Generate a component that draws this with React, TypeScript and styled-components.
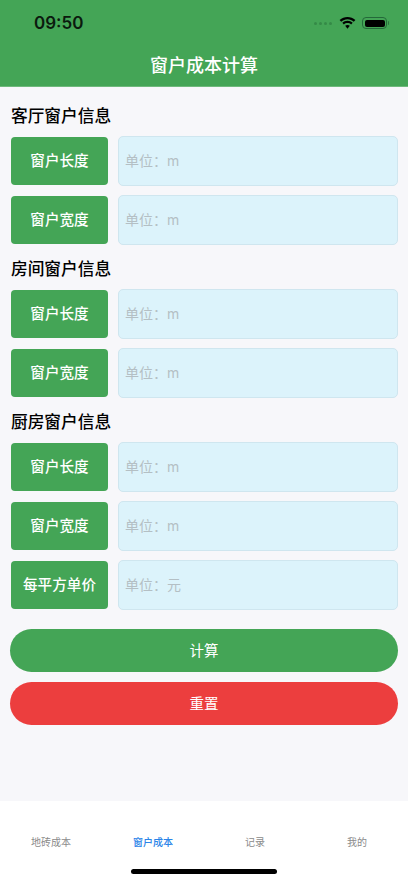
import React from "react";
import styled, { createGlobalStyle } from "styled-components";

const GlobalStyle = createGlobalStyle`
  html, body {
    margin: 0;
    padding: 0;
    background: #f7f7fa;
  }
  * {
    box-sizing: border-box;
  }
`;

const FONT = `Inter, "Noto Sans CJK SC", sans-serif`;

const sections = [
  {
    title: "客厅窗户信息",
    rows: [
      { label: "窗户长度", unit: "单位： m" },
      { label: "窗户宽度", unit: "单位： m" },
    ],
  },
  {
    title: "房间窗户信息",
    rows: [
      { label: "窗户长度", unit: "单位： m" },
      { label: "窗户宽度", unit: "单位： m" },
    ],
  },
  {
    title: "厨房窗户信息",
    rows: [
      { label: "窗户长度", unit: "单位： m" },
      { label: "窗户宽度", unit: "单位： m" },
      { label: "每平方单价", unit: "单位： 元" },
    ],
  },
];

const tabs = ["地砖成本", "窗户成本", "记录", "我的"];

const App = () => {
  return (
    <Page>
      <GlobalStyle />
      <Header>
        <StatusBar>
          <Time>09:50</Time>
          <StatusIcons>
            <Dots>
              <i />
              <i />
              <i />
              <i />
            </Dots>
            <svg width="17" height="12" viewBox="0 0 17 12">
              <path
                d="M8.5 2.3c2.4 0 4.6.9 6.3 2.5l1.6-1.7C14.2 1 11.4 0 8.5 0S2.8 1 .6 3.1l1.6 1.7C3.9 3.2 6.1 2.3 8.5 2.3z"
                fill="#000"
              />
              <path
                d="M8.5 6.1c1.4 0 2.6.5 3.6 1.4l1.6-1.7c-1.4-1.3-3.2-2-5.2-2s-3.8.7-5.2 2l1.6 1.7c1-.9 2.2-1.4 3.6-1.4z"
                fill="#000"
              />
              <path
                d="M8.5 7.9c-.9 0-1.7.3-2.3.9l2.3 3 2.3-3C10.2 8.2 9.4 7.9 8.5 7.9z"
                fill="#000"
              />
            </svg>
            <Battery>
              <BatteryFill />
            </Battery>
          </StatusIcons>
        </StatusBar>
        <Title>窗户成本计算</Title>
      </Header>
      <Content>
        {sections.map((section) => (
          <Section key={section.title}>
            <SectionTitle>{section.title}</SectionTitle>
            {section.rows.map((row, index) => (
              <Row key={index}>
                <Label>{row.label}</Label>
                <Input placeholder={row.unit} readOnly />
              </Row>
            ))}
          </Section>
        ))}
        <Buttons>
          <ActionButton $color="#44a556">计算</ActionButton>
          <ActionButton $color="#ec3e3e">重置</ActionButton>
        </Buttons>
      </Content>
      <TabBar>
        {tabs.map((tab) => (
          <Tab key={tab} $active={tab === "窗户成本"}>
            {tab}
          </Tab>
        ))}
        <HomeIndicator />
      </TabBar>
    </Page>
  );
};

export default App;

const Page = styled.div`
  width: 408px;
  height: 883px;
  display: flex;
  flex-direction: column;
  overflow: hidden;
  background: #f7f7fa;
  font-family: ${FONT};
`;

const Header = styled.div`
  height: 87px;
  flex: none;
  background: #44a556;
  display: flex;
  flex-direction: column;
  border-bottom: 1px solid #6fb97c;
`;

const StatusBar = styled.div`
  height: 45px;
  display: flex;
  align-items: center;
  justify-content: space-between;
  padding: 2px 21px 0 34px;
`;

const Time = styled.span`
  font-size: 17px;
  font-weight: 600;
  color: #0b1a0e;
`;

const StatusIcons = styled.div`
  display: flex;
  align-items: center;
  gap: 6px;
`;

const Dots = styled.div`
  display: flex;
  gap: 2px;
  margin-right: 1px;
  i {
    width: 3px;
    height: 3px;
    border-radius: 50%;
    background: #358a47;
  }
`;

const Battery = styled.div`
  position: relative;
  width: 25px;
  height: 12px;
  padding: 1.5px;
  border: 1px solid #24693a;
  border-radius: 4px;
  &::after {
    content: "";
    position: absolute;
    right: -3px;
    top: 3px;
    width: 1.5px;
    height: 4px;
    border-radius: 0 1px 1px 0;
    background: #2c7440;
  }
`;

const BatteryFill = styled.div`
  width: 100%;
  height: 100%;
  background: #000;
  border-radius: 2px;
`;

const Title = styled.div`
  text-align: center;
  color: #fff;
  font-size: 18px;
  font-weight: 500;
  line-height: 41px;
  padding-top: 1px;
`;

const Content = styled.div`
  flex: 1;
  padding: 19px 10px 0;
  display: flex;
  flex-direction: column;
`;

const Section = styled.div`
  display: flex;
  flex-direction: column;
  gap: 9px;
  margin-bottom: 14px;
`;

const SectionTitle = styled.div`
  font-size: 16.7px;
  font-weight: 500;
  line-height: 21px;
  height: 21px;
  padding-left: 1px;
  color: #000;
`;

const Row = styled.div`
  display: flex;
  align-items: center;
  gap: 10px;
  height: 50px;
`;

const Label = styled.div`
  width: 97px;
  height: 48px;
  margin-left: 1px;
  flex: none;
  display: flex;
  align-items: center;
  justify-content: center;
  padding-bottom: 3px;
  background: #44a556;
  border-radius: 4px;
  color: #fff;
  font-size: 14.6px;
  font-weight: 500;
`;

const Input = styled.input`
  flex: 1;
  min-width: 0;
  height: 50px;
  padding: 0 6px 2px;
  background: #dcf3fb;
  border: 1px solid #cfe6ef;
  border-radius: 5px;
  font-family: ${FONT};
  font-size: 14px;
  word-spacing: -4px;
  outline: none;
  &::placeholder {
    color: #b4bfc4;
    opacity: 1;
  }
`;

const Buttons = styled.div`
  display: flex;
  flex-direction: column;
  gap: 10px;
  margin-top: 5px;
`;

const ActionButton = styled.button<{ $color: string }>`
  height: 43px;
  padding: 0 0 3px;
  border: none;
  border-radius: 22px;
  background: ${({ $color }) => $color};
  color: #fff;
  font-family: ${FONT};
  font-size: 14.5px;
`;

const TabBar = styled.div`
  position: relative;
  height: 82px;
  flex: none;
  background: #fff;
  display: grid;
  grid-template-columns: repeat(4, 1fr);
  padding-top: 33px;
`;

const Tab = styled.div<{ $active?: boolean }>`
  text-align: center;
  font-size: 10px;
  line-height: 16px;
  font-weight: ${({ $active }) => ($active ? 500 : 400)};
  color: ${({ $active }) => ($active ? "#2a84e8" : "#8a8a8a")};
`;

const HomeIndicator = styled.div`
  position: absolute;
  left: 131px;
  bottom: 9px;
  width: 146px;
  height: 5px;
  border-radius: 3px;
  background: #000;
`;
